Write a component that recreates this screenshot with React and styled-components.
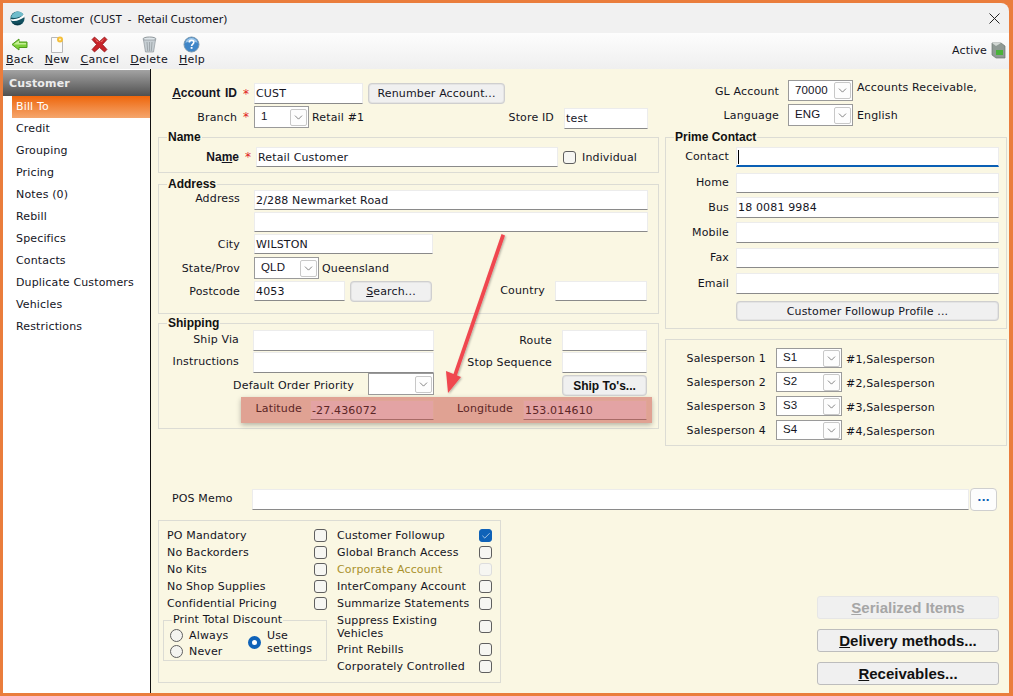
import React from "react";
import styled, { createGlobalStyle } from "styled-components";
import { ChevronDown, Check } from "lucide-react";

const GlobalStyle = createGlobalStyle`
  html, body { margin: 0; padding: 0; background: #ea7d3c; }
  body { font-family: "DejaVu Sans", sans-serif; font-size: 11px; letter-spacing: 0.15px; color: #14141e; }
  * { box-sizing: border-box; }
`;

const Windows = styled.div`
  width: 1013px;
  height: 696px;
  padding: 3px 4px 3px 3px;
  background: #ea7d3c;
  overflow: hidden;
`;
const Frame = styled.div`
  position: relative;
  height: 690px;
  display: flex;
  flex-direction: column;
  border-radius: 0 8px 0 0;
  overflow: hidden;
`;
const TitleBar = styled.div`
  height: 30px;
  flex: none;
  display: flex;
  align-items: center;
  padding: 0 9px 0 7px;
  background: #f1f1f1;
  white-space: pre;
  font-family: "Noto Sans", sans-serif;
  font-size: 11.5px;
  letter-spacing: 0;
`;
const TitleText = styled.span`
  margin-left: 6px;
  flex: 1;
`;
const Toolbar = styled.div`
  height: 36px;
  flex: none;
  display: flex;
  padding-left: 3px;
  gap: 11px;
  background: linear-gradient(#fdfdfd, #efefef);
`;
const ToolButton = styled.div`
  display: flex;
  flex-direction: column;
  align-items: center;
  padding-top: 3px;
  line-height: 13px;
  letter-spacing: 0.25px;
  svg { display: block; height: 17px; }
`;
const Key = styled.span`
  text-decoration: underline;
`;
const ActiveBox = styled.div`
  margin-left: auto;
  display: flex;
  align-items: center;
  gap: 4px;
  padding: 0 3px 2px 0;
`;
const Body = styled.div`
  flex: 1;
  display: flex;
  min-height: 0;
`;
const Sidebar = styled.nav`
  width: 148px;
  flex: none;
  background: #fff;
  border-right: 1px solid #111;
  padding-top: 1px;
`;
const SideHeader = styled.div`
  height: 26px;
  line-height: 27px;
  padding-left: 6px;
  font-weight: bold;
  color: #ececec;
  background: linear-gradient(#a3a3a3, #505050);
`;
const SideItem = styled.div`
  height: 22px;
  line-height: 21px;
  margin-left: 9px;
  padding-left: 4px;
  color: ${(p) => (p.$active ? "#fff" : "inherit")};
  background: ${(p) => (p.$active ? "linear-gradient(#ee660c, #f5a66d)" : "transparent")};
`;
const Main = styled.main`
  flex: 1;
  background: #faf7e3;
  padding: 11px 2px 0 7px;
`;
const Upper = styled.div`
  display: flex;
  align-items: flex-start;
  gap: 6px;
  height: 367px;
`;
const LeftCol = styled.div`
  width: 501px;
  flex: none;
  padding-top: 3px;
`;
const RightCol = styled.div`
  width: 342px;
  flex: none;
`;
const Row = styled.div`
  display: flex;
  align-items: ${(p) => p.$align || "center"};
  height: ${(p) => p.$h || 20}px;
  margin-top: ${(p) => p.$mt || 0}px;
  padding-left: ${(p) => p.$pl || 0}px;
  padding-right: ${(p) => p.$pr || 0}px;
`;
const Label = styled.label`
  flex: none;
  width: ${(p) => p.$w}px;
  margin-right: ${(p) => p.$mr ?? 14}px;
  margin-top: ${(p) => p.$mt ?? -1}px;
  text-align: right;
  white-space: nowrap;
`;
const BoldLabel = styled(Label)`
  font-family: "Liberation Sans", sans-serif;
  font-weight: bold;
  font-size: 12px;
  letter-spacing: 0;
  word-spacing: 1.5px;
`;
const Star = styled.span`
  flex: none;
  width: 17px;
  padding-left: 6px;
  color: #e02020;
  font-size: 12px;
`;
const TextBox = styled.div`
  flex: none;
  width: ${(p) => p.$w}px;
  height: ${(p) => p.$hgt || "100%"};
  margin-left: ${(p) => p.$ml || 0}px;
  margin-top: ${(p) => p.$mt || 0}px;
  padding: 0 1px;
  display: flex;
  align-items: center;
  background: #fff;
  border: 1px solid #ececec;
  border-bottom: 1px solid #8a8a8a;
`;
const FocusBox = styled(TextBox)`
  border-bottom: 2px solid #0a5fb4;
`;
const Caret = styled.span`
  width: 1px;
  height: 14px;
  background: #000;
`;
const ComboBox = styled.div`
  flex: none;
  width: ${(p) => p.$w}px;
  height: ${(p) => p.$hgt || 22}px;
  margin-left: ${(p) => p.$ml || 0}px;
  display: flex;
  align-items: center;
  justify-content: space-between;
  padding: 0 1px 2px 6px;
  font-family: "Liberation Sans", sans-serif;
  font-size: 11.5px;
  background: #fff;
  border: 1px solid #9a9a9a;
`;
const ComboArrow = styled.span`
  width: 17px;
  height: 17px;
  margin-top: 2px;
  display: flex;
  align-items: center;
  justify-content: center;
  background: #fdfdfd;
  border: 1px solid #c8c8c8;
  border-radius: 2px;
  color: #444;
`;
const Aside = styled.span`
  flex: none;
  margin-left: ${(p) => p.$ml ?? 4}px;
  margin-top: ${(p) => p.$mt || 0}px;
  white-space: nowrap;
`;
const RightLabel = styled.span`
  flex: none;
  width: ${(p) => p.$w}px;
  margin-right: 10px;
  margin-top: ${(p) => p.$mt ?? -1}px;
  text-align: right;
  white-space: nowrap;
`;
const PushLabel = styled.span`
  margin-left: auto;
  margin-right: 10px;
  margin-top: 1px;
  white-space: nowrap;
`;
const PlainButton = styled.button`
  flex: none;
  width: ${(p) => p.$w}px;
  height: ${(p) => p.$hgt || 21}px;
  margin-left: ${(p) => p.$ml || 0}px;
  margin-top: ${(p) => p.$mt || 0}px;
  padding: 0;
  font: inherit;
  letter-spacing: inherit;
  color: inherit;
  background: #f0f0f0;
  border: 2px solid #e4e4e4;
  border-radius: 4px;
  outline: 1px solid #cfcfcf;
  outline-offset: -1px;
`;
const BoldButton = styled(PlainButton)`
  font-family: "Liberation Sans", sans-serif;
  font-weight: bold;
  font-size: 12px;
  letter-spacing: 0;
  color: #111;
`;
const Group = styled.fieldset`
  margin: ${(p) => p.$mt || 0}px 0 0 0;
  padding: ${(p) => p.$pt || 0}px 0 ${(p) => p.$pb || 0}px 0;
  min-width: 0;
  border: 1px solid #dcdcd4;
  width: ${(p) => (p.$w ? `${p.$w}px` : "auto")};
  height: ${(p) => (p.$hgt ? `${p.$hgt}px` : "auto")};
`;
const Legend = styled.legend`
  margin-left: 8px;
  padding: 0 1px;
  line-height: 12px;
  font-family: "Liberation Sans", sans-serif;
  font-weight: bold;
  font-size: 12px;
  letter-spacing: 0;
  color: #111;
`;
const CheckText = styled(Aside)`
  margin-left: 6px;
`;
const Highlight = styled.div`
  display: flex;
  align-items: center;
  width: 411px;
  height: 26px;
  margin: 0 0 0 82px;
  background: #e0a293;
  color: #5c2626;
  box-shadow: 0 2px 5px rgba(0, 0, 0, 0.28);
`;
const TintBox = styled(TextBox)`
  height: 20px;
  background: #e3a3a4;
  border: 1px solid #e0a596;
  border-bottom: 1px solid #a86a66;
`;
const MemoRow = styled(Row)`
  margin-top: 41px;
  padding-left: 14px;
`;
const MemoLabel = styled.span`
  flex: none;
  width: 80px;
  margin-top: -3px;
`;
const MoreButton = styled.button`
  flex: none;
  width: 27px;
  height: 23px;
  margin-left: 1px;
  padding: 0 0 5px;
  font: inherit;
  font-weight: bold;
  color: #0a5fb4;
  background: #fdfdfd;
  border: 1px solid #cfcfcf;
  border-radius: 4px;
`;
const Lower = styled.div`
  display: flex;
  justify-content: space-between;
  margin-top: 9px;
  padding-right: 8px;
`;
const Flags = styled(Group)`
  display: flex;
  padding: 6px 8px 0 4px;
`;
const FlagCol = styled.div`
  width: ${(p) => p.$w}px;
  flex: none;
  margin-left: ${(p) => p.$ml || 0}px;
`;
const FlagRow = styled.div`
  display: flex;
  align-items: center;
  justify-content: space-between;
  min-height: ${(p) => (p.$tall ? 29 : 17)}px;
  padding-left: ${(p) => p.$pl || 0}px;
  color: ${(p) => (p.$disabled ? "#a9912c" : "inherit")};
  line-height: 13px;
`;
const Box = styled.span`
  flex: none;
  width: 13px;
  height: 13px;
  margin-left: ${(p) => p.$ml || 0}px;
  display: inline-flex;
  align-items: center;
  justify-content: center;
  border-radius: 3px;
  background: ${(p) => (p.$on ? "#0f62b8" : "#f6f6f2")};
  border: 1px solid ${(p) => (p.$on ? "#0f62b8" : p.$off ? "#dddddd" : "#5f5f5f")};
  color: #fff;
`;
const DiscountGroup = styled(Group)`
  width: 164px;
  height: 47px;
  margin-top: 2px;
  display: flex;
  padding: 3px 0 0 6px;
`;
const DiscountLegend = styled(Legend)`
  margin-left: 2px;
  font-family: "DejaVu Sans", sans-serif;
  font-weight: normal;
  font-size: 11px;
  letter-spacing: 0.15px;
  color: inherit;
`;
const RadioCol = styled.div`
  display: flex;
  flex-direction: column;
  gap: 3px;
  width: 78px;
  flex: none;
`;
const RadioRow = styled.div`
  display: flex;
  align-items: center;
  align-self: flex-start;
  gap: 6px;
  line-height: 13px;
`;
const Radio = styled.span`
  flex: none;
  width: 13px;
  height: 13px;
  border-radius: 50%;
  background: ${(p) => (p.$on ? "#fff" : "#f4f4f0")};
  border: ${(p) => (p.$on ? "4px solid #0f62b8" : "1px solid #5f5f5f")};
`;
const BigColumn = styled.div`
  display: flex;
  flex-direction: column;
  gap: 10px;
  margin-top: 76px;
`;
const BigButton = styled.button`
  width: 182px;
  height: 23px;
  padding: 0;
  font-family: "Liberation Sans", sans-serif;
  font-weight: bold;
  font-size: 15px;
  line-height: 15px;
  color: ${(p) => (p.$disabled ? "#a6a6a6" : "#111")};
  background: #f0f0f0;
  border: 1px solid ${(p) => (p.$disabled ? "#e6e6e6" : "#bdbdbd")};
  border-radius: 3px;
`;
const ArrowLayer = styled.svg`
  position: absolute;
  left: 438px;
  top: 228px;
  pointer-events: none;
`;

const Combo = ({ w, h, ml, value }) => (
  <ComboBox $w={w} $hgt={h} $ml={ml}>
    <span>{value}</span>
    <ComboArrow><ChevronDown size={13} strokeWidth={1.2} /></ComboArrow>
  </ComboBox>
);

const LogoIcon = () => (
  <svg width="15" height="15" viewBox="0 0 16 16">
    <circle cx="8" cy="8" r="7.5" fill="#12505f" />
    <path d="M1 7C2 3 5 .5 8.500.5c3 0 5 1.500 6 3.500-4 3-9 4-13.500 3z" fill="#6fbccb" />
    <path d="M1 8.500c5 1 10-1 14-5 1 1 .7 2.500.5 3-4 3-9 5-14 4z" fill="#fff" />
    <path d="M3 13c3 1 7 1 10-1-2 3-7 4-10 1z" fill="#0a3340" />
  </svg>
);
const BackIcon = () => (
  <svg width="17" height="17" viewBox="0 0 17 17">
    <path d="M1 8.500 8 3v3h8v5.500H8V14z" fill="#7fd03a" stroke="#4f9a1e" strokeWidth="1" />
    <path d="M3 8 8 4.500V7h7v1.500H3z" fill="#c5ee96" />
  </svg>
);
const NewIcon = () => (
  <svg width="17" height="17" viewBox="0 0 17 17">
    <path d="M2.500 1.500h8l3 3v12h-11z" fill="#fbfbfb" stroke="#b8b8b8" strokeWidth="1" />
    <circle cx="11" cy="3.500" r="3" fill="#f5bf3b" />
    <circle cx="11" cy="3.500" r="1" fill="#fff4c8" />
  </svg>
);
const CancelIcon = () => (
  <svg width="17" height="17" viewBox="0 0 17 17">
    <path d="M3.500 1 8.500 5.500 13.500 1 16 3.500 11.500 8.500 16 13.500 13.500 16 8.500 11.500 3.500 16 1 13.500 5.500 8.500 1 3.500z" fill="#c8242a" stroke="#8c1519" strokeWidth="0.7" />
    <path d="M3.500 2 8.500 6.500 13.500 2 11 6 6 6z" fill="#e66a62" />
  </svg>
);
const TrashIcon = () => (
  <svg width="17" height="17" viewBox="0 0 17 17">
    <ellipse cx="8.500" cy="3" rx="6.500" ry="2" fill="#dfe6ea" stroke="#8f979b" />
    <path d="M2.500 4 4.500 16h8l2-12z" fill="#c6ced3" stroke="#8f979b" strokeWidth="0.7" />
    <path d="M6 6l.7 9M8.500 6v9M11 6l-.7 9" stroke="#8f979b" strokeWidth="0.7" />
  </svg>
);
const HelpIcon = () => (
  <svg width="17" height="17" viewBox="0 0 17 17">
    <circle cx="8.500" cy="8.500" r="7.500" fill="#3f86c8" stroke="#7a99b0" />
    <path d="M2.500 7a6 5 0 0 1 12 0c-3-2-9-2-12 0z" fill="#9cc6ea" />
    <path d="M6.300 6.500c0-3 4.500-3 4.500-.2 0 1.800-2.200 1.800-2.200 3.700" fill="none" stroke="#fff" strokeWidth="1.600" />
    <rect x="7.700" y="11" width="1.800" height="1.800" fill="#fff" />
  </svg>
);
const ActiveIcon = () => (
  <svg width="15" height="17" viewBox="0 0 15 17">
    <path d="M1 1h9l4 3v12H5L1 13z" fill="#8f9a94" stroke="#6c7570" strokeWidth="0.7" />
    <path d="M1 1h9l-5 3z" fill="#d2d8d4" />
    <rect x="5" y="8" width="7" height="5" fill="#49b33a" />
  </svg>
);
const CloseIcon = () => (
  <svg width="11" height="11" viewBox="0 0 11 11">
    <path d="M.5.500l10 10M10.500.500l-10 10" stroke="#222" strokeWidth="1" />
  </svg>
);

const tools = [
  ["Back", <BackIcon key="b" />],
  ["New", <NewIcon key="n" />],
  ["Cancel", <CancelIcon key="c" />],
  ["Delete", <TrashIcon key="d" />],
  ["Help", <HelpIcon key="h" />],
];
const sections = ["Bill To", "Credit", "Grouping", "Pricing", "Notes (0)", "Rebill", "Specifics", "Contacts", "Duplicate Customers", "Vehicles", "Restrictions"];
const contacts = [
  ["Home", "", 6, 20],
  ["Bus", "18 0081 9984", 4, 21],
  ["Mobile", "", 4, 21],
  ["Fax", "", 5, 20],
  ["Email", "", 5, 21],
];
const leftFlags = ["PO Mandatory", "No Backorders", "No Kits", "No Shop Supplies", "Confidential Pricing"];

const Flag = ({ text, on, off, pl, tall }) => (
  <FlagRow $disabled={off} $pl={pl} $tall={tall}>
    <span>{text}</span>
    <Box $on={on} $off={off}>{on && <Check size={10} strokeWidth={1.5} />}</Box>
  </FlagRow>
);

export default function App() {
  return (
    <>
      <GlobalStyle />
      <Windows>
        <Frame>
          <TitleBar>
            <LogoIcon />
            <TitleText>Customer  (CUST  -  Retail Customer)</TitleText>
            <CloseIcon />
          </TitleBar>
          <Toolbar>
            {tools.map(([name, icon]) => (
              <ToolButton key={name}>
                {icon}
                <span><Key>{name[0]}</Key>{name.slice(1)}</span>
              </ToolButton>
            ))}
            <ActiveBox>Active <ActiveIcon /></ActiveBox>
          </Toolbar>
          <Body>
            <Sidebar>
              <SideHeader>Customer</SideHeader>
              {sections.map((s, i) => (
                <SideItem key={s} $active={i === 0}>{s}</SideItem>
              ))}
            </Sidebar>
            <Main>
              <Upper>
                <LeftCol>
                  <Row $h={21}>
                    <BoldLabel $w={79} $mr={0}><Key>A</Key>ccount ID</BoldLabel>
                    <Star>*</Star>
                    <TextBox $w={109}>CUST</TextBox>
                    <PlainButton $w={137} $ml={5}>Renumber Account...</PlainButton>
                  </Row>
                  <Row $h={22} $mt={2} $pr={11}>
                    <Label $w={79} $mr={0} $mt={1}>Branch</Label>
                    <Star>*</Star>
                    <Combo w={55} value="1" />
                    <Aside $ml={3} $mt={1}>Retail #1</Aside>
                    <PushLabel>Store ID</PushLabel>
                    <TextBox $w={84} $hgt="21px" $mt={2}>test</TextBox>
                  </Row>

                  <Group $mt={3} $pt={4} $pb={5}>
                    <Legend>Name</Legend>
                    <Row $h={20}>
                      <BoldLabel $w={80} $mr={0}>Na<Key>m</Key>e</BoldLabel>
                      <Star>*</Star>
                      <TextBox $w={302}>Retail Customer</TextBox>
                      <Box $ml={5} />
                      <CheckText>Individual</CheckText>
                    </Row>
                  </Group>

                  <Group $mt={5} $pb={12}>
                    <Legend>Address</Legend>
                    <Row>
                      <Label $w={81} $mt={-3}>Address</Label>
                      <TextBox $w={394}>2/288 Newmarket Road</TextBox>
                    </Row>
                    <Row $mt={2} $pl={95}><TextBox $w={394} /></Row>
                    <Row $mt={2}>
                      <Label $w={81} $mt={1}>City</Label>
                      <TextBox $w={179}>WILSTON</TextBox>
                    </Row>
                    <Row $mt={3} $h={22}>
                      <Label $w={81} $mt={1}>State/Prov</Label>
                      <Combo w={65} value="QLD" />
                      <Aside $ml={3}>Queensland</Aside>
                    </Row>
                    <Row $mt={2}>
                      <Label $w={81} $mt={1}>Postcode</Label>
                      <TextBox $w={91}>4053</TextBox>
                      <PlainButton $w={82} $ml={5}><Key>S</Key>earch...</PlainButton>
                      <RightLabel $w={113}>Country</RightLabel>
                      <TextBox $w={92} />
                    </Row>
                  </Group>

                  <Group $mt={3} $pb={5}>
                    <Legend>Shipping</Legend>
                    <Row $h={21} $mt={1}>
                      <Label $w={80} $mt={-3}>Ship Via</Label>
                      <TextBox $w={181} />
                      <RightLabel $w={118}>Route</RightLabel>
                      <TextBox $w={85} />
                    </Row>
                    <Row $h={21} $mt={1}>
                      <Label $w={80} $mt={-3}>Instructions</Label>
                      <TextBox $w={181} />
                      <RightLabel $w={118}>Stop Sequence</RightLabel>
                      <TextBox $w={85} />
                    </Row>
                    <Row $h={24} $align="flex-start">
                      <Label $w={195} $mt={6}>Default Order Priority</Label>
                      <Combo w={66} />
                      <BoldButton $w={85} $ml={128} $mt={2}>Ship To's...</BoldButton>
                    </Row>
                    <Highlight>
                      <Label $w={61} $mr={8} $mt={-3}>Latitude</Label>
                      <TintBox $w={124}>-27.436072</TintBox>
                      <Label $w={79} $mr={10} $mt={-3}>Longitude</Label>
                      <TintBox $w={124}>153.014610</TintBox>
                    </Highlight>
                  </Group>
                </LeftCol>

                <RightCol>
                  <Row $h={21}>
                    <Label $w={114} $mr={9} $mt={2}>GL Account</Label>
                    <Combo w={65} h={21} value="70000" />
                    <Aside $mt={-7}>Accounts Receivable,</Aside>
                  </Row>
                  <Row $h={22} $mt={3}>
                    <Label $w={114} $mr={9} $mt={0}>Language</Label>
                    <Combo w={65} value="ENG" />
                    <Aside>English</Aside>
                  </Row>

                  <Group $mt={5} $pt={4} $pb={7}>
                    <Legend>Prime Contact</Legend>
                    <Row>
                      <Label $w={63} $mr={7}>Contact</Label>
                      <FocusBox $w={263}><Caret /></FocusBox>
                    </Row>
                    {contacts.map(([label, value, mt, h]) => (
                      <Row key={label} $mt={mt} $h={h}>
                        <Label $w={63} $mr={7}>{label}</Label>
                        <TextBox $w={263}>{value}</TextBox>
                      </Row>
                    ))}
                    <Row $mt={7} $pl={70}>
                      <PlainButton $w={263} $hgt={20}>Customer Followup Profile ...</PlainButton>
                    </Row>
                  </Group>

                  <Group $mt={10} $pt={8} $pb={5}>
                    {[1, 2, 3, 4].map((n) => (
                      <Row key={n} $mt={n === 1 ? 0 : 4}>
                        <Label $w={100} $mr={10} $mt={1}>Salesperson {n}</Label>
                        <Combo w={66} h={20} value={`S${n}`} />
                        <Aside $mt={2}>#{n},Salesperson</Aside>
                      </Row>
                    ))}
                  </Group>
                </RightCol>
              </Upper>

              <MemoRow $h={23}>
                <MemoLabel>POS Memo</MemoLabel>
                <TextBox $w={717} $hgt="21px" />
                <MoreButton>...</MoreButton>
              </MemoRow>

              <Lower>
                <Flags $w={343} $hgt={163}>
                  <FlagCol $w={164}>
                    {leftFlags.map((f) => <Flag key={f} text={f} pl={4} />)}
                    <DiscountGroup>
                      <DiscountLegend>Print Total Discount</DiscountLegend>
                      <RadioCol>
                        <RadioRow><Radio />Always</RadioRow>
                        <RadioRow><Radio />Never</RadioRow>
                      </RadioCol>
                      <RadioRow>
                        <Radio $on />
                        <span>Use<br />settings</span>
                      </RadioRow>
                    </DiscountGroup>
                  </FlagCol>
                  <FlagCol $w={155} $ml={10}>
                    <Flag text="Customer Followup" on />
                    <Flag text="Global Branch Access" />
                    <Flag text="Corporate Account" off />
                    <Flag text="InterCompany Account" />
                    <Flag text="Summarize Statements" />
                    <Flag text={<>Suppress Existing<br />Vehicles</>} tall />
                    <Flag text="Print Rebills" />
                    <Flag text="Corporately Controlled" />
                  </FlagCol>
                </Flags>
                <BigColumn>
                  <BigButton $disabled><Key>S</Key>erialized Items</BigButton>
                  <BigButton><Key>D</Key>elivery methods...</BigButton>
                  <BigButton><Key>R</Key>eceivables...</BigButton>
                </BigColumn>
              </Lower>
            </Main>
          </Body>
          <ArrowLayer width="80" height="180" viewBox="0 0 80 180">
            <defs>
              <filter id="arrowShade" x="-30%" y="-10%" width="160%" height="120%">
                <feDropShadow dx="1" dy="1" stdDeviation="1" floodColor="#000" floodOpacity="0.3" />
              </filter>
            </defs>
            <g filter="url(#arrowShade)" fill="#f0474f">
              <path d="M60.500 3 64 4.500 14 150l-3.500-1.200z" />
              <path d="M7 162 5 140 20 146z" />
            </g>
          </ArrowLayer>
        </Frame>
      </Windows>
    </>
  );
}
